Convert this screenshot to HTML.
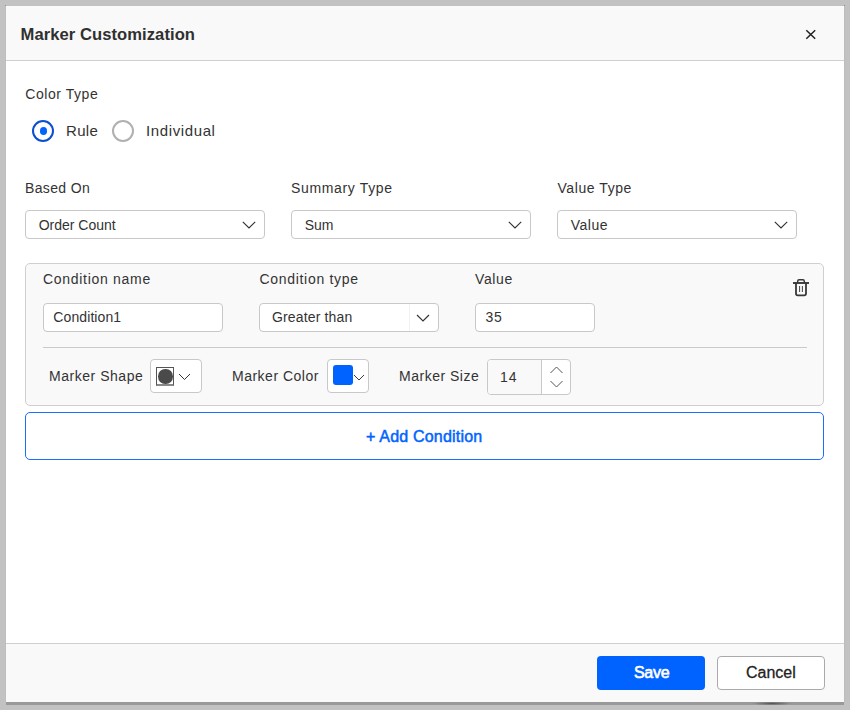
<!DOCTYPE html>
<html><head><meta charset="utf-8">
<style>
*{box-sizing:border-box;margin:0;padding:0}
html,body{width:850px;height:710px;overflow:hidden;background:#c2c2c2;font-family:"Liberation Sans",sans-serif;color:#333}
.abs{position:absolute}
#dlg{position:absolute;left:6px;top:6px;width:838px;height:696px;background:#fff;box-shadow:0 3px 0 #999,-1px 0 0 #bebebe,1px 0 0 #bcbcbc}
#hdr{position:absolute;left:0;top:0;width:838px;height:55px;background:#f9f9f9;border-bottom:1px solid #cfcfcf}
#ftr{position:absolute;left:0;top:637px;width:838px;height:59px;background:#f9f9f9;border-top:1px solid #cfcfcf}
.t{position:absolute;white-space:nowrap;line-height:1}
.lbl{font-size:14px;letter-spacing:0.6px;color:#333}
.box{position:absolute;background:#fff;border:1px solid #c8c8c8;border-radius:4px}
svg{position:absolute;overflow:visible}
</style></head><body>
<div id="dlg">
  <div id="hdr"></div>
  <div id="ftr"></div>
</div>

<!-- header -->
<div class="t" style="left:20.5px;top:27px;font-size:16.6px;font-weight:bold;letter-spacing:0.06px;color:#303030">Marker Customization</div>
<svg style="left:0;top:0" width="850" height="710">
  <path d="M806.3 30.3 L815.2 38.8 M815.2 30.3 L806.3 38.8" stroke="#222" stroke-width="1.5" fill="none"/>
</svg>

<!-- Color type -->
<div class="t lbl" style="left:25.3px;top:87px;letter-spacing:0.55px">Color Type</div>
<div class="abs" style="left:32px;top:120px;width:22px;height:22px;border:2px solid #0a4fd1;border-radius:50%"></div>
<div class="abs" style="left:39.5px;top:127px;width:7.5px;height:8px;background:#0064ff;border-radius:50%"></div>
<div class="t" style="left:66px;top:123px;font-size:15px;letter-spacing:0.3px;color:#333">Rule</div>
<div class="abs" style="left:112px;top:120px;width:22px;height:22px;border:2px solid #b0b0b0;border-radius:50%"></div>
<div class="t" style="left:146px;top:123px;font-size:15px;letter-spacing:0.62px;color:#333">Individual</div>

<!-- based on row -->
<div class="t lbl" style="left:25px;top:181px;letter-spacing:0.35px">Based On</div>
<div class="t lbl" style="left:291px;top:181px;letter-spacing:0.65px">Summary Type</div>
<div class="t lbl" style="left:557.5px;top:181px;letter-spacing:0.57px">Value Type</div>

<div class="box" style="left:25px;top:210px;width:240px;height:29px"></div>
<div class="box" style="left:291px;top:210px;width:240px;height:29px"></div>
<div class="box" style="left:557px;top:210px;width:240px;height:29px"></div>
<div class="t" style="left:38.7px;top:218px;font-size:14px;color:#333">Order Count</div>
<div class="t" style="left:304.7px;top:218px;font-size:14px;color:#333">Sum</div>
<div class="t" style="left:570.7px;top:218px;font-size:14px;letter-spacing:0.5px;color:#333">Value</div>
<svg style="left:0;top:0" width="850" height="710">
  <path d="M242.8 221.8 L249 228 L255.2 221.8 M508.8 221.8 L515 228 L521.2 221.8 M774.8 221.8 L781 228 L787.2 221.8" stroke="#333" stroke-width="1.15" fill="none"/>
</svg>

<!-- condition panel -->
<div class="abs" style="left:25px;top:263px;width:799px;height:143px;background:#f9f9f9;border:1px solid #cfcfcf;border-radius:5px"></div>
<div class="t lbl" style="left:43px;top:272px;letter-spacing:0.7px">Condition name</div>
<div class="t lbl" style="left:259.5px;top:272px;letter-spacing:0.69px">Condition type</div>
<div class="t lbl" style="left:475px;top:272px">Value</div>

<div class="box" style="left:43px;top:303px;width:180px;height:29px"></div>
<div class="t" style="left:53.3px;top:310px;font-size:14px;letter-spacing:0.1px;color:#333">Condition1</div>
<div class="box" style="left:259px;top:303px;width:180px;height:29px"></div>
<div class="abs" style="left:409px;top:304px;width:1px;height:27px;background:#f2f2f2"></div>
<div class="t" style="left:272px;top:310px;font-size:14px;letter-spacing:0.15px;color:#333">Greater than</div>
<div class="box" style="left:475px;top:303px;width:120px;height:29px"></div>
<div class="t" style="left:485.6px;top:310px;font-size:14px;letter-spacing:0.7px;color:#333">35</div>
<svg style="left:0;top:0" width="850" height="710">
  <path d="M417 315 L423 321 L429 315" stroke="#333" stroke-width="1.15" fill="none"/>
  <!-- trash -->
  <path d="M793 283 L809 283" stroke="#383838" stroke-width="1.9" fill="none"/>
  <path d="M797.7 283 L797.7 281.2 Q797.7 279.8 799.1 279.8 L802.9 279.8 Q804.3 279.8 804.3 281.2 L804.3 283" stroke="#383838" stroke-width="1.5" fill="none"/>
  <path d="M796 283 L796 293.6 Q796 295.4 797.8 295.4 L804.2 295.4 Q806 295.4 806 293.6 L806 283" stroke="#383838" stroke-width="1.8" fill="none"/>
  <path d="M799.6 286 L799.6 292 M802.4 286 L802.4 292" stroke="#383838" stroke-width="0.95" fill="none"/>
</svg>
<div class="abs" style="left:43px;top:347px;width:764px;height:1px;background:#cacaca"></div>

<div class="t lbl" style="left:49px;top:369px;letter-spacing:0.53px">Marker Shape</div>
<div class="box" style="left:150px;top:359px;width:52px;height:34px"></div>
<div class="abs" style="left:156px;top:367px;width:18px;height:19px;border:1px solid #555;border-bottom:2px solid #888;background:#fff"></div>
<div class="abs" style="left:158px;top:369px;width:14.5px;height:14.5px;border-radius:50%;background:#4a4a4a"></div>
<svg style="left:0;top:0" width="850" height="710">
  <path d="M179 374 L184.5 379.5 L190 374" stroke="#333" stroke-width="1" fill="none"/>
</svg>

<div class="t lbl" style="left:232px;top:369px;letter-spacing:0.5px">Marker Color</div>
<div class="box" style="left:327px;top:359px;width:42px;height:34px"></div>
<div class="abs" style="left:333px;top:365px;width:20px;height:20px;border-radius:3px;background:#0062ff"></div>
<svg style="left:0;top:0" width="850" height="710">
  <path d="M354 375 L359 380 L364 375" stroke="#333" stroke-width="0.95" fill="none"/>
</svg>

<div class="t lbl" style="left:399px;top:369px;letter-spacing:0.51px">Marker Size</div>
<div class="abs" style="left:487px;top:359px;width:84px;height:36px;border:1px solid #c8c8c8;border-radius:4px;background:#fff;overflow:hidden">
  <div class="abs" style="left:0;top:0;width:54px;height:34px;background:#f9f9f9;border-right:1px solid #c8c8c8"></div>
</div>
<div class="t" style="left:500px;top:370px;font-size:14px;letter-spacing:0.9px;color:#333">14</div>
<svg style="left:0;top:0" width="850" height="710">
  <path d="M550.5 373 L556.5 367 L562.5 373 M550.5 381 L556.5 387 L562.5 381" stroke="#555" stroke-width="1" fill="none"/>
</svg>

<!-- add condition -->
<div class="abs" style="left:25px;top:412px;width:799px;height:48px;border:1px solid #1a6dff;border-radius:5px;background:#fff"></div>
<div class="t" style="left:366px;top:429px;font-size:16px;letter-spacing:0.2px;-webkit-text-stroke:0.5px #0064ff;color:#0064ff">+ Add Condition</div>

<!-- footer buttons -->
<div class="abs" style="left:597px;top:656px;width:108px;height:34px;background:#0062ff;border-radius:4px"></div>
<div class="t" style="left:634px;top:665px;font-size:16px;letter-spacing:-0.3px;-webkit-text-stroke:0.6px #fff;color:#fff">Save</div>
<div class="abs" style="left:717px;top:656px;width:108px;height:34px;background:#fff;border:1px solid #aaa;border-radius:4px"></div>
<div class="t" style="left:746px;top:665px;font-size:16px;-webkit-text-stroke:0.28px #222;color:#222">Cancel</div>
<div class="abs" style="left:752px;top:702px;width:40px;height:3px;background:radial-gradient(ellipse 50% 60% at 50% 50%,#555,rgba(153,153,153,0))"></div>
<div class="abs" style="left:5px;top:5px;width:1px;height:1px;background:#8a90a0"></div>
<div class="abs" style="left:844px;top:5px;width:1px;height:1px;background:#8a90a0"></div>
</body></html>
